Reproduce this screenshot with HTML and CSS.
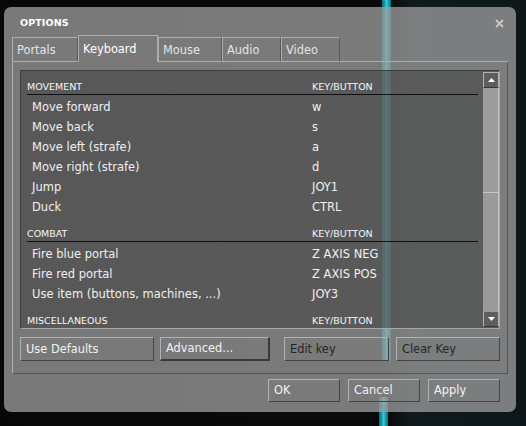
FILE: index.html
```html
<!DOCTYPE html>
<html>
<head>
<meta charset="utf-8">
<title>Options</title>
<link rel="stylesheet" href="styles.css">
</head>
<body>
<div class="stripe stripe-top"></div>
<div class="stripe stripe-bottom"></div>
<div class="dialog">
  <div class="titlebar">
    <span class="title">OPTIONS</span>
    <svg class="close" width="9" height="9" viewBox="0 0 9 9"><path d="M1 1 L8 8 M8 1 L1 8" stroke="#c9c9c9" stroke-width="1.8" fill="none"/></svg>
  </div>
  <div class="tabs">
    <div class="tab w-portals">Portals</div>
    <div class="tab tab-active w-keyboard">Keyboard</div>
    <div class="tab w-mouse">Mouse</div>
    <div class="tab w-audio">Audio</div>
    <div class="tab w-video">Video</div>
    <div class="tab-fill"></div>
  </div>
  <div class="sheet">
    <div class="panel">
      <div class="list">
        <div class="section">
          <div class="sec-head"><span class="col-a">MOVEMENT</span><span>KEY/BUTTON</span></div>
          <div class="rows">
            <div class="row"><span class="col-b">Move forward</span><span>w</span></div>
            <div class="row"><span class="col-b">Move back</span><span>s</span></div>
            <div class="row"><span class="col-b">Move left (strafe)</span><span>a</span></div>
            <div class="row"><span class="col-b">Move right (strafe)</span><span>d</span></div>
            <div class="row"><span class="col-b">Jump</span><span>JOY1</span></div>
            <div class="row"><span class="col-b">Duck</span><span>CTRL</span></div>
          </div>
        </div>
        <div class="section">
          <div class="sec-head"><span class="col-a">COMBAT</span><span>KEY/BUTTON</span></div>
          <div class="rows">
            <div class="row"><span class="col-b">Fire blue portal</span><span>Z AXIS NEG</span></div>
            <div class="row"><span class="col-b">Fire red portal</span><span>Z AXIS POS</span></div>
            <div class="row"><span class="col-b">Use item (buttons, machines, ...)</span><span>JOY3</span></div>
          </div>
        </div>
        <div class="section">
          <div class="sec-head"><span class="col-a">MISCELLANEOUS</span><span>KEY/BUTTON</span></div>
        </div>
      </div>
      <div class="scrollbar">
        <div class="sb-btn"><svg width="7" height="4" viewBox="0 0 7 4"><polygon points="3.5,0 7,4 0,4" fill="#ffffff"/></svg></div>
        <div class="sb-thumb"></div>
        <div class="sb-track"></div>
        <div class="sb-btn sb-down"><svg width="7" height="4" viewBox="0 0 7 4"><polygon points="0,0 7,0 3.5,4" fill="#ffffff"/></svg></div>
      </div>
    </div>
    <div class="actions">
      <div class="btn w-defaults">Use Defaults</div>
      <div class="btn btn-default w-advanced">Advanced...</div>
      <div class="btn btn-disabled w-edit">Edit key</div>
      <div class="btn btn-disabled w-clear">Clear Key</div>
    </div>
  </div>
  <div class="footer">
    <div class="btn w-foot">OK</div>
    <div class="btn w-foot">Cancel</div>
    <div class="btn w-foot">Apply</div>
  </div>
</div>
</body>
</html>
```

FILE: styles.css
```css
html, body {
  margin: 0;
  padding: 0;
}
body {
  width: 526px;
  height: 426px;
  overflow: hidden;
  position: relative;
  font-family: "DejaVu Sans", "Liberation Sans", sans-serif;
  background: linear-gradient(90deg, #070707 0%, #0a0a0a 74%, #111b1e 78%, #0d1719 100%);
}

.stripe {
  position: absolute;
  background: linear-gradient(90deg, #007381 0%, #0b9eac 30%, #48c8d2 52%, #10a2b0 72%, #007683 100%);
}
.stripe-top {
  left: 382px;
  top: 0;
  width: 9px;
  height: 361px;
}
.stripe-bottom {
  left: 379px;
  top: 397px;
  width: 9px;
  height: 29px;
}

.dialog {
  position: relative;
  z-index: 1;
  margin: 7px 0 0 4px;
  width: 512px;
  height: 405px;
  box-sizing: border-box;
  border-radius: 7px;
  background: rgba(158, 158, 158, 0.76);
  color: #ececec;
}

.titlebar {
  height: 28px;
  box-sizing: border-box;
  padding: 10px 12px 0 16px;
  display: flex;
  align-items: flex-start;
}
.title {
  font-weight: bold;
  font-size: 9.5px;
  line-height: 12px;
  color: #ffffff;
  letter-spacing: 0.1px;
}
.close {
  margin-left: auto;
  margin-top: 2px;
  display: block;
}

.tabs {
  display: flex;
  align-items: flex-end;
  height: 27px;
  margin-left: 8px;
  width: 496px;
}
.tab {
  box-sizing: border-box;
  height: 25px;
  padding: 1px 0 0 4px;
  line-height: 23px;
  font-size: 11.4px;
  color: #e4e4e4;
  border-top: 1px solid #adadad;
  border-left: 1px solid #adadad;
  border-right: 1px solid #5a5a5a;
  border-bottom: 1px solid #adadad;
}
.tab-active {
  height: 27px;
  padding-top: 0;
  line-height: 26px;
  color: #ffffff;
  border-right-color: #adadad;
  border-bottom: none;
}
.tab-fill {
  flex: 1;
  height: 1px;
  background: #adadad;
}
.w-portals { width: 66px; }
.w-keyboard { width: 80px; }
.w-mouse { width: 64px; }
.w-audio { width: 59px; }
.w-video { width: 59px; }

.sheet {
  margin-left: 8px;
  width: 496px;
  height: 312px;
  box-sizing: border-box;
  border-left: 1px solid #adadad;
  border-right: 1px solid #555555;
  border-bottom: 1px solid #555555;
  padding: 8px 7px 0 7px;
}

.panel {
  width: 480px;
  height: 259px;
  box-sizing: border-box;
  border-top: 1px solid #3e3e3e;
  border-left: 1px solid #3e3e3e;
  border-bottom: 1px solid #a8a8a8;
  border-right: 1px solid #a8a8a8;
  background: rgba(42, 42, 42, 0.42);
  display: flex;
  overflow: hidden;
}
.list {
  flex: 1;
  padding: 8px 5px 0 6px;
  overflow: hidden;
}
.section + .section {
  margin-top: 9px;
}
.sec-head {
  display: flex;
  height: 15px;
  line-height: 15px;
  font-size: 9.5px;
  color: #f6f6f6;
  border-bottom: 1px solid #101010;
}
.col-a {
  width: 285px;
  flex: none;
}
.rows {
  padding-top: 2px;
}
.row {
  display: flex;
  height: 20px;
  line-height: 20px;
  font-size: 11.5px;
  padding-left: 5px;
  color: #f0f0f0;
}
.col-b {
  width: 280px;
  flex: none;
}

.scrollbar {
  width: 16px;
  display: flex;
  flex-direction: column;
  padding: 1px 0;
}
.sb-btn {
  height: 16px;
  box-sizing: border-box;
  border-top: 1px solid #b4b4b4;
  border-left: 1px solid #b4b4b4;
  border-right: 1px solid #b4b4b4;
  border-bottom: 1px solid #383838;
  background: #5e5e5e;
  display: flex;
  align-items: center;
  justify-content: center;
}
.sb-btn svg { display: block; }
.sb-down {
  border-top-color: #9a9a9a;
}
.sb-thumb {
  height: 105px;
  box-sizing: border-box;
  background: #9c9c9c;
  border-right: 1px solid #c6c6c6;
  border-bottom: 1px solid #c6c6c6;
}
.sb-track {
  flex: 1;
  background: #9a9a9a;
  border-right: 1px solid #c6c6c6;
}

.btn {
  box-sizing: border-box;
  height: 24px;
  line-height: 22px;
  padding-left: 5px;
  font-size: 11.4px;
  color: #f2f2f2;
  border-top: 1px solid #b2b2b2;
  border-left: 1px solid #b2b2b2;
  border-right: 1px solid #454545;
  border-bottom: 1px solid #454545;
  white-space: nowrap;
}
.btn-default {
  border-right: 2px solid #3a3a3a;
  border-bottom: 2px solid #3a3a3a;
  line-height: 21px;
}
.btn-disabled {
  color: #262626;
}
.actions {
  display: flex;
  margin-top: 8px;
  height: 24px;
}
.w-defaults { width: 134px; }
.w-advanced { width: 110px; margin-left: 6px; }
.w-edit { width: 105px; margin-left: 14px; }
.w-clear { width: 104px; margin-left: 7px; }

.footer {
  display: flex;
  justify-content: flex-end;
  gap: 8px;
  margin-top: 5px;
  padding-right: 16px;
}
.w-foot {
  width: 72px;
  height: 23px;
  line-height: 21px;
}
```
